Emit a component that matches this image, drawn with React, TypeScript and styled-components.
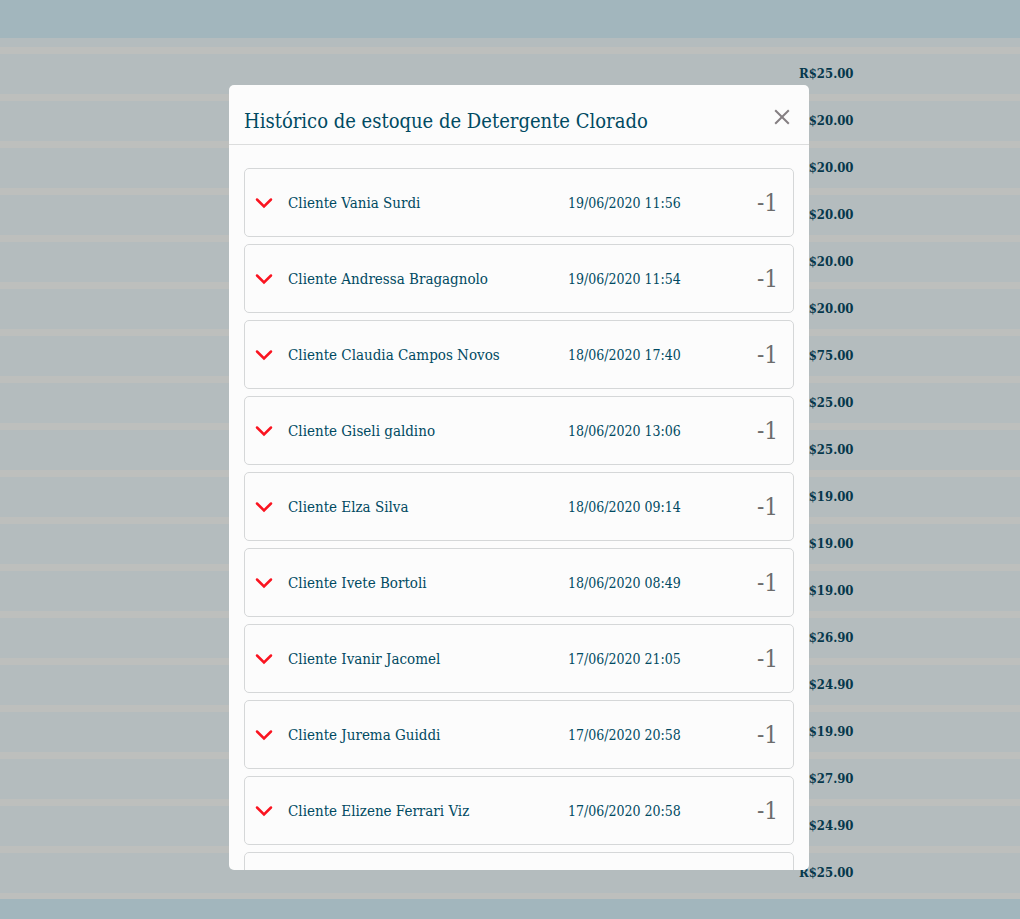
import React from "react";
import styled, { createGlobalStyle } from "styled-components";

const GlobalStyle = createGlobalStyle`
  * { box-sizing: border-box; }
  body {
    margin: 0;
    background: #a2b6bd;
    color: #004a62;
    font-family: "Roboto Slab", "DejaVu Serif Condensed", "DejaVu Serif", serif;
    font-size: 15px;
    line-height: 20px;
  }
`;

const Page = styled.div`
  position: relative;
  min-height: 100vh;
  padding-top: 38px;
`;

const PriceList = styled.ul`
  display: flex;
  flex-direction: column;
  gap: 7px;
  margin: 0;
  padding: 16px 0 6px;
  list-style: none;
  background: linear-gradient(#b4bcbe 9px, #bdbfbd 9px);
`;

const PriceRow = styled.li`
  display: grid;
  grid-template-columns: 1fr 221px;
  align-items: center;
  height: 40px;
  background: #b4bcbe;
  color: #06384c;
  font-size: 13px;
  font-weight: 700;
`;

const Price = styled.span`
  grid-column: 2;
`;

const Overlay = styled.div`
  position: absolute;
  inset: 0;
  display: flex;
  justify-content: center;
  padding: 85px 0 49px 18px;
`;

const Modal = styled.section`
  display: flex;
  flex-direction: column;
  width: 100%;
  max-width: 580px;
  border-radius: 5px;
  background: #fcfcfc;
  overflow: hidden;
`;

const ModalHeader = styled.header`
  display: flex;
  flex: none;
  align-items: flex-start;
  justify-content: space-between;
  padding: 20px 15px 8px;
  border-bottom: 1px solid #dcdddd;
`;

const Title = styled.h1`
  margin: 0;
  padding-top: 1px;
  font-size: 20px;
  font-weight: 400;
  line-height: 30px;
`;

const IconButton = styled.button`
  display: flex;
  align-items: center;
  justify-content: center;
  width: 24px;
  height: 24px;
  padding: 0;
  border: 0;
  background: transparent;
  cursor: pointer;
`;

const History = styled.ul`
  display: flex;
  flex: 1;
  flex-direction: column;
  gap: 7px;
  min-height: 0;
  margin: 0;
  padding: 23px 15px;
  list-style: none;
  overflow-y: auto;
  scrollbar-width: none;
`;

const Entry = styled.li`
  display: grid;
  flex: none;
  grid-template-columns: 36px 280px 1fr auto;
  align-items: center;
  height: 69px;
  padding: 0 15px 0 7px;
  border: 1px solid #d5d7d8;
  border-radius: 5px;
`;

const EntryDate = styled.time`
  font-size: 14px;
`;

const Quantity = styled.span`
  color: #6c6c6c;
  font-size: 24px;
  line-height: 32px;
`;

const prices = [
  "25.00", "20.00", "20.00", "20.00", "20.00", "20.00", "75.00", "25.00", "25.00",
  "19.00", "19.00", "19.00", "26.90", "24.90", "19.90", "27.90", "24.90", "25.00",
];

const entries = [
  ["Vania Surdi", "19/06/2020 11:56"],
  ["Andressa Bragagnolo", "19/06/2020 11:54"],
  ["Claudia Campos Novos", "18/06/2020 17:40"],
  ["Giseli galdino", "18/06/2020 13:06"],
  ["Elza Silva", "18/06/2020 09:14"],
  ["Ivete Bortoli", "18/06/2020 08:49"],
  ["Ivanir Jacomel", "17/06/2020 21:05"],
  ["Jurema Guiddi", "17/06/2020 20:58"],
  ["Elizene Ferrari Viz", "17/06/2020 20:58"],
];

const CloseIcon = () => (
  <svg width="16" height="16" viewBox="0 0 16 16" fill="none" stroke="#857f82" strokeWidth="2" aria-hidden="true">
    <path d="M1.2 1.2l13.6 13.6M14.8 1.2l-13.6 13.6" />
  </svg>
);

const ChevronIcon = () => (
  <svg width="18" height="12" viewBox="0 0 18 12" fill="none" stroke="#fa1420" strokeWidth="2.5" strokeLinecap="round" aria-hidden="true">
    <path d="M2 2.5l7 7 7-7" />
  </svg>
);

export default function App() {
  return (
    <>
      <GlobalStyle />
      <Page>
        <PriceList>
          {prices.map((price, index) => (
            <PriceRow key={index}>
              <Price>R${price}</Price>
            </PriceRow>
          ))}
        </PriceList>
        <Overlay>
          <Modal role="dialog" aria-labelledby="history-title">
            <ModalHeader>
              <Title id="history-title">Histórico de estoque de Detergente Clorado</Title>
              <IconButton type="button" aria-label="Fechar">
                <CloseIcon />
              </IconButton>
            </ModalHeader>
            <History>
              {entries.map(([client, date]) => (
                <Entry key={client}>
                  <IconButton type="button" aria-label={`Detalhes de ${client}`}>
                    <ChevronIcon />
                  </IconButton>
                  <span>Cliente {client}</span>
                  <EntryDate>{date}</EntryDate>
                  <Quantity>-1</Quantity>
                </Entry>
              ))}
              <Entry />
            </History>
          </Modal>
        </Overlay>
      </Page>
    </>
  );
}
